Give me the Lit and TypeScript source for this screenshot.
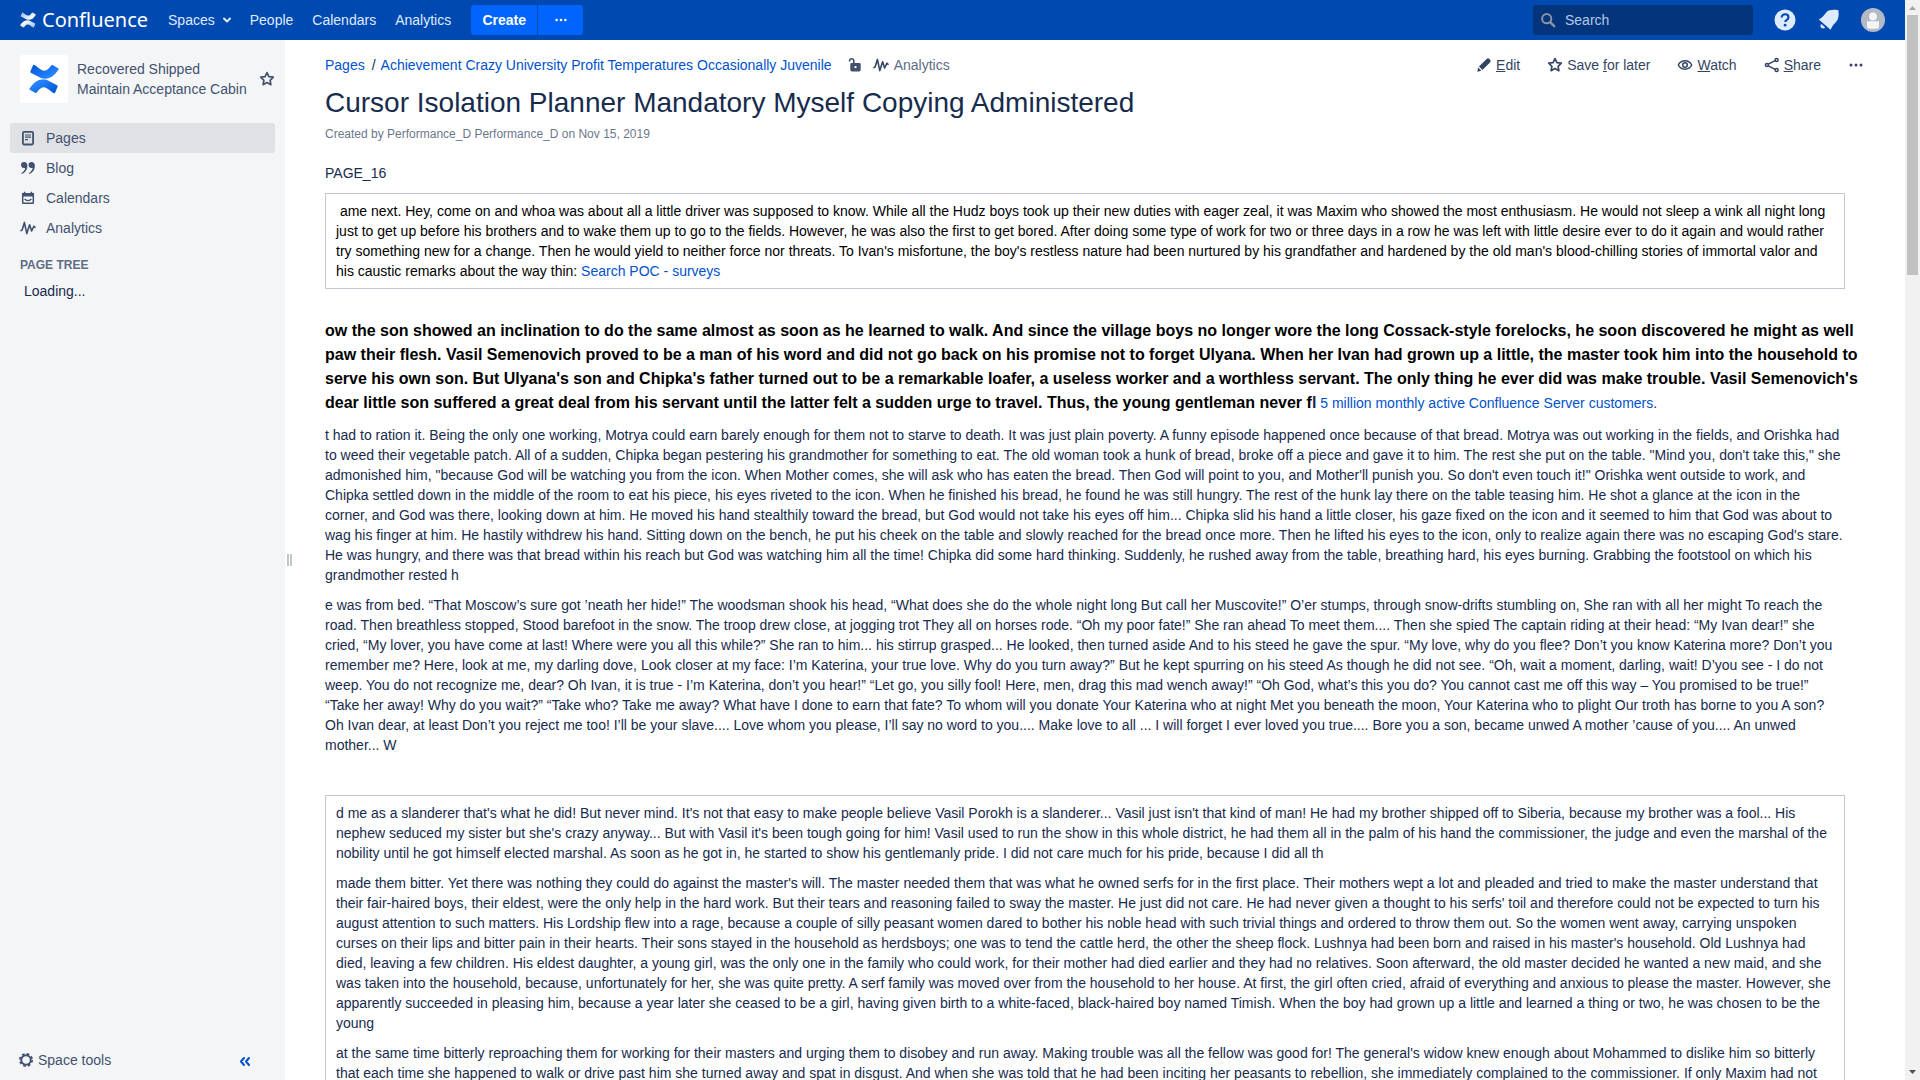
import { LitElement, html, css, svg } from "lit";
import { customElement } from "lit/decorators.js";

const star = svg`<path d="M8 1.6l1.9 4 4.4.6-3.2 3.1.8 4.4L8 11.6l-3.9 2.1.8-4.4L1.7 6.2l4.4-.6z" fill="none" stroke="currentColor" stroke-width="1.7" stroke-linejoin="round"/>`;
const pulse = svg`<path d="M1 10.600L2.200 9.800L4.400 2.400L6.800 13.600L9.600 4.800L11.600 11L14 6.200L15 7.200" fill="none" stroke="currentColor" stroke-width="1.600" stroke-linecap="round" stroke-linejoin="round"/>`;
const dots = svg`<g fill="currentColor"><circle cx="3" cy="8" r="1.5"/><circle cx="8" cy="8" r="1.5"/><circle cx="13" cy="8" r="1.5"/></g>`;
const icon = (body: unknown, size = 16) =>
  html`<svg width=${size} height=${size} viewBox="0 0 16 16" aria-hidden="true">${body}</svg>`;

const iconPage = svg`<rect x="2.9" y="1.9" width="10.2" height="12.6" rx="1.2" fill="none" stroke="currentColor" stroke-width="1.8"/><path d="M5 5h6M5 7.2h6M5 9.6h3" stroke="currentColor" stroke-width="1.2"/>`;
const iconQuote = svg`<path d="M4.2 2a3 3 0 0 0-.3 6c.5.1 1 0 1.300-.1C4.900 9.900 3.500 11.800 1.200 13.200l.6.8C5.500 12.700 7.400 9.500 7.400 5.700 7.400 3.300 6 2 4.200 2zM11.700 2a3 3 0 0 0-.3 6c.5.1 1 0 1.300-.1-.3 2-1.700 3.900-4 5.300l.6.8c3.700-1.300 5.600-4.500 5.600-8.300C14.900 3.300 13.500 2 11.700 2z" fill="currentColor"/>`;
const iconCalendar = svg`<rect x="2.700" y="3.700" width="10.600" height="9.600" rx=".6" fill="none" stroke="currentColor" stroke-width="1.500"/><path d="M2 3h12v3.500H2zM3.800 1.800h1.600V4H3.800zM10.600 1.800h1.600V4h-1.600z" fill="currentColor"/><path d="M4.600 8.800c1.600 2.300 5.200 2.300 6.800 0" fill="none" stroke="currentColor" stroke-width="1.300"/>`;
const iconLock = svg`<path d="M2.600 4.600V3.900a2.100 2.100 0 0 1 4.200 0V6.500" fill="none" stroke="currentColor" stroke-width="1.600"/><path fill-rule="evenodd" d="M4.500 6h8a1.200 1.200 0 0 1 1.200 1.200v5.600a1.600 1.600 0 0 1-1.600 1.600H4.900a1.600 1.600 0 0 1-1.600-1.600V7.200A1.200 1.200 0 0 1 4.500 6zm4 2.900a1.200 1.200 0 1 0 0 2.400 1.200 1.200 0 0 0 0-2.400z" fill="currentColor"/>`;
const iconPencil = svg`<path d="M1.200 14.800l1-4.200 3.200 3.200zM3 9.600L10.600 2a2 2 0 0 1 2.800 0l.6.6a2 2 0 0 1 0 2.800L6.400 13z" fill="currentColor"/>`;
const iconEye = svg`<path d="M1.300 8C4 2.400 12 2.400 14.700 8 12 13.600 4 13.600 1.300 8z" fill="none" stroke="currentColor" stroke-width="1.500"/><circle cx="8" cy="8" r="2.300" fill="none" stroke="currentColor" stroke-width="1.500"/>`;
const iconShare = svg`<path d="M4.200 7.200l7-3.600M4.200 8.800l7 3.600" stroke="currentColor" stroke-width="1.500"/><g fill="none" stroke="currentColor" stroke-width="1.500"><circle cx="2.900" cy="8" r="1.500"/><circle cx="12.600" cy="2.900" r="1.500"/><circle cx="12.600" cy="13.100" r="1.500"/></g>`;
const iconGear = svg`<circle cx="8" cy="8" r="4.700" fill="none" stroke="currentColor" stroke-width="1.900"/><circle cx="8" cy="8" r="6.100" fill="none" stroke="currentColor" stroke-width="1.800" stroke-dasharray="2.600 2.190"/>`;
const iconSearch = svg`<circle cx="6.700" cy="6.700" r="4.600" fill="none" stroke="currentColor" stroke-width="2"/><path d="M10.200 10.200l4 4" stroke="currentColor" stroke-width="2.400" stroke-linecap="round"/>`;

const mark = (id: string, from: string, to: string, size: number) => html`
  <svg width=${size} height=${size} viewBox="0 0 32 32" aria-hidden="true">
    <defs>
      <linearGradient id="${id}a" x1="1" y1="1" x2="0.200" y2="0.300"><stop offset="0" stop-color=${from} /><stop offset="1" stop-color=${to} /></linearGradient>
      <linearGradient id="${id}b" x1="0" y1="0" x2="0.800" y2="0.700"><stop offset="0" stop-color=${from} /><stop offset="1" stop-color=${to} /></linearGradient>
    </defs>
    <path fill="url(#${id}b)" d="M5.300.8C4.800.6 4.500.8 4.300 1.200L1.400 8.100c-.2.500-.1.900.4 1.100C8 11.700 12 15.700 17.500 15.600 24 15.400 28 11 31.500 5.800c.3-.5.200-.9-.3-1.200L25 1.100c-.5-.2-.8-.1-1.100.3C21.500 4.600 19.500 7.100 16.500 7.200 12.600 7.300 9.500 2.900 5.300.8z" />
    <path fill="url(#${id}a)" d="M26.700 31.200c.5.200.8 0 1-.4l2.900-6.900c.2-.5.1-.9-.4-1.100C24 20.300 20 16.300 14.500 16.400 8 16.600 4 21 .5 26.200c-.3.500-.2.900.3 1.200L7 30.900c.5.200.8.1 1.100-.3C10.500 27.400 12.500 24.900 15.500 24.800c3.900-.1 7 4.300 11.200 6.400z" />
  </svg>`;

@customElement("app-root")
export class AppRoot extends LitElement {
  static styles = css`
    :host {
      display: grid;
      grid-template: 100vh / minmax(0, 1fr) 15px;
      font: 14px/20px "Liberation Sans", Arial, sans-serif;
      color: #172b4d;
      background: #fff;
    }
    * { box-sizing: border-box; }
    a { color: #0052cc; text-decoration: none; }
    button { font: inherit; color: inherit; background: none; border: 0; padding: 0; margin: 0; display: flex; align-items: center; justify-content: center; }
    svg { display: block; flex: none; }
    p, h1, ul, ol { margin: 0; padding: 0; }
    ul, ol { list-style: none; }
    .shell { display: flex; flex-direction: column; min-height: 0; }

    .top { display: flex; align-items: center; flex: none; height: 40px; padding: 0 20px; background: #0049b0; color: #deebff; }
    .top a { color: inherit; }
    .logo { display: flex; align-items: center; gap: 6px; }
    .word { font: 20px/26px "Noto Sans", "Open Sans", sans-serif; color: #fff; }
    .menu { display: flex; gap: 19px; margin-left: 20px; }
    .drop { gap: 8px; }
    .create { display: flex; gap: 1px; margin-left: 20px; color: #fff; }
    .create button { height: 30px; background: #0065ff; }
    .create .make { width: 66px; font-weight: 700; border-radius: 3px 0 0 3px; }
    .create .more { width: 45px; border-radius: 0 3px 3px 0; }
    .search { display: flex; align-items: center; gap: 9px; width: 220px; height: 30px; margin-left: auto; padding: 0 7px; border-radius: 3px; background: #04357c; color: #8993a4; }
    .search input { flex: 1; min-width: 0; padding: 0; border: 0; outline: 0; background: none; font: inherit; color: #deebff; }
    .search input::placeholder { color: #b3c8e8; opacity: 1; }
    .tools { display: flex; align-items: center; gap: 20px; margin-left: 20px; }

    .body { display: flex; flex: 1; min-height: 0; }
    .side { display: flex; flex-direction: column; flex: none; width: 285px; background: #f4f5f7; color: #42526e; }
    .side a { color: inherit; }
    .space { display: flex; align-items: center; padding: 15px 10px 0 20px; }
    .badge { display: grid; place-items: center; width: 48px; height: 48px; margin-right: 9px; border-radius: 3px; background: #fff; }
    .space .name { flex: 1; }
    .nav { margin: 20px 10px 0; }
    .nav a { display: flex; align-items: center; gap: 10px; height: 30px; padding: 0 10px; border-radius: 3px; }
    .nav .on { background: #dfe1e5; }
    .label { padding: 12px 20px 0; font-size: 12px; font-weight: 700; color: #5e6c84; }
    .loading { padding: 6px 24px; color: #172b4d; }
    .foot { display: flex; align-items: center; justify-content: space-between; margin-top: auto; padding: 0 32px 10px 18px; }
    .foot a { display: flex; align-items: center; gap: 4px; }
    .fold { color: #0052cc; }
    .grip { display: flex; align-items: center; justify-content: center; gap: 1px; flex: none; width: 9px; }
    .grip i { width: 2px; height: 12px; background: #c1c7d0; }

    .main { flex: 1; min-width: 0; overflow: hidden; padding: 15px 41px 0 31px; }
    .bar { display: flex; align-items: center; justify-content: space-between; height: 20px; }
    .crumbs, .crumbs ol, .actions, .actions a { display: flex; align-items: center; }
    .crumbs li + li::before { content: "/"; color: #172b4d; margin: 0 5px 0 7px; }
    .lock { margin: 0 10px 0 15px; color: #42526e; }
    .stat { display: flex; align-items: center; gap: 5px; color: #5e6c84; }
    .stat svg, .actions { color: #344563; }
    .actions a { color: inherit; gap: 4px; }
    .actions { gap: 27px; }
    h1 { padding-top: 12px; font-size: 28px; line-height: 32px; font-weight: 400; }
    .by { padding-top: 5px; font-size: 12px; color: #6b778c; }
    .text { padding: 19px 19px 0 0; }
    .text p + p, .cell p + p { margin-top: 10px; }
    .cell { margin-top: 10px; padding: 7px 10px; border: 1px solid #c1c7d0; }
    .ink { color: #000; }
    .lead { margin: 30px -24px 0 0; font-size: 16px; line-height: 24px; }
    .lead b { color: #000; }
    .lead .navy { color: #172b4d; }
    .lead span { font-size: 14px; }
    .second { margin-top: 40px; }

    .scroll { display: flex; flex-direction: column; background: #f1f1f1; }
    .thumb { width: 11px; height: 260px; margin: 0 2px auto; background: #c1c1c1; }
  `;

  render() {
    return html`
      <div class="shell">
        <header class="top">
          <a class="logo" href="#" aria-label="Confluence">${mark("w", "#8fb3e6", "#ffffff", 16)}<span class="word">Confluence</span></a>
          <nav class="menu">
            <button class="drop">Spaces
              <svg width="8" height="16" viewBox="4 0 8 16"><path d="M5 6.500l3 3 3-3" fill="none" stroke="currentColor" stroke-width="2" stroke-linecap="round" stroke-linejoin="round" /></svg>
            </button>
            <a href="#">People</a><a href="#">Calendars</a><a href="#">Analytics</a>
          </nav>
          <div class="create">
            <button class="make">Create</button>
            <button class="more" aria-label="More">${icon(dots, 14)}</button>
          </div>
          <label class="search">${icon(iconSearch)}<input type="text" placeholder="Search" aria-label="Search" /></label>
          <div class="tools">
            <button aria-label="Help">
              <svg width="24" height="24" viewBox="0 0 24 24"><circle cx="12" cy="12" r="10.500" fill="#deebff" /><path d="M8.700 9.600c0-4.600 6.800-4.200 6.800-.2 0 2.400-3.300 2.400-3.300 4.600" fill="none" stroke="#0049b0" stroke-width="2.100" /><circle cx="12.100" cy="17.200" r="1.400" fill="#0049b0" /></svg>
            </button>
            <button aria-label="Notifications">
              <svg width="24" height="24" viewBox="0 0 24 24" fill="#deebff"><path d="M1.800 11.400C5.500 9.600 7 7 9.200 4.400 12 1.600 16.500 1.500 21.400 2.200c.6 4.800.4 8.300-2 11.200-2.500 2.700-4.400 4.700-5.800 8.400z" /><path d="M4.200 16l4 3.600c-1.300 1.300-3 1.100-3.900.2-1-.9-1.200-2.500-.1-3.800z" /></svg>
            </button>
            <button aria-label="Profile">
              <svg width="24" height="24" viewBox="0 0 24 24"><circle cx="12" cy="12" r="12" fill="#b3bac5" /><circle cx="12" cy="8.500" r="3.900" fill="#f4f5f7" /><path d="M6 13.300h12v5a2.500 2.500 0 0 1-2.500 2.500h-7A2.500 2.500 0 0 1 6 18.300z" fill="#f4f5f7" /></svg>
            </button>
          </div>
        </header>

        <div class="body">
          <aside class="side">
            <div class="space">
              <span class="badge">${mark("s", "#0052cc", "#2684ff", 30)}</span>
              <a class="name" href="#">Recovered Shipped<br />Maintain Acceptance Cabin</a>
              <button aria-label="Add to my spaces">${icon(star)}</button>
            </div>
            <nav class="nav">
              <a class="on" href="#">${icon(iconPage)}Pages</a>
              <a href="#">${icon(iconQuote)}Blog</a>
              <a href="#">${icon(iconCalendar)}Calendars</a>
              <a href="#">${icon(pulse)}Analytics</a>
            </nav>
            <div class="label">PAGE TREE</div>
            <div class="loading">Loading...</div>
            <div class="foot">
              <a href="#">${icon(iconGear)}Space tools</a>
              <button class="fold" aria-label="Collapse sidebar">
                <svg width="16" height="16" viewBox="0 0 16 16"><path d="M7 6L4 9.500L7 13M12 6L9 9.500L12 13" fill="none" stroke="currentColor" stroke-width="2" stroke-linecap="round" stroke-linejoin="round" /></svg>
              </button>
            </div>
          </aside>
          <div class="grip"><i></i><i></i></div>

          <main class="main">
            <div class="bar">
              <div class="crumbs">
                <ol>
                  <li><a href="#">Pages</a></li>
                  <li><a href="#">Achievement Crazy University Profit Temperatures Occasionally Juvenile</a></li>
                </ol>
                <button class="lock" aria-label="Unrestricted">${icon(iconLock)}</button>
                <a class="stat" href="#">${icon(pulse)}Analytics</a>
              </div>
              <div class="actions">
                <a href="#">${icon(iconPencil)}<span><u>E</u>dit</span></a>
                <a href="#">${icon(star)}<span>Save <u>f</u>or later</span></a>
                <a href="#">${icon(iconEye)}<span><u>W</u>atch</span></a>
                <a href="#">${icon(iconShare)}<span><u>S</u>hare</span></a>
                <button aria-label="More actions">${icon(dots)}</button>
              </div>
            </div>
            <h1>Cursor Isolation Planner Mandatory Myself Copying Administered</h1>
            <div class="by">Created by Performance_D Performance_D on Nov 15, 2019</div>

            <article class="text">
              <p>PAGE_16</p>
              <section class="cell ink">
                <p>&nbsp;ame next. Hey, come on and whoa was about all a little driver was supposed to know. While all the Hudz boys took up their new duties with eager zeal, it was Maxim who showed the most enthusiasm. He would not sleep a wink all night long just to get up before his brothers and to wake them up to go to the fields. However, he was also the first to get bored. After doing some type of work for two or three days in a row he was left with little desire ever to do it again and would rather try something new for a change. Then he would yield to neither force nor threats. To Ivan's misfortune, the boy's restless nature had been nurtured by his grandfather and hardened by the old man's blood-chilling stories of immortal valor and his caustic remarks about the way thin: <a href="#">Search POC - surveys</a></p>
              </section>
              <p class="lead"><b>ow the son showed an inclination to do the same almost as soon as he learned to walk. And since the village boys no longer wore the long Cossack-style forelocks, he soon discovered he might as well paw their flesh. Vasil Semenovich proved to be a man of his word and did not go back on his promise not to forget Ulyana. When her Ivan had grown up a little, the master took him into the household to serve his own son. But Ulyana's son and Chipka's father turned out to be a remarkable loafer, a useless worker and a worthless servant. The only thing he ever did was make trouble. Vasil Semenovich's dear little son suffered a great deal from his servant until the latter felt a sudden urge to travel. Thus, the young gentleman never f</b><b class="navy">l</b><span> <a href="#">5 million monthly active Confluence Server customers</a>.</span></p>
              <p>t had to ration it. Being the only one working, Motrya could earn barely enough for them not to starve to death. It was just plain poverty. A funny episode happened once because of that bread. Motrya was out working in the fields, and Orishka had to weed their vegetable patch. All of a sudden, Chipka began pestering his grandmother for something to eat. The old woman took a hunk of bread, broke off a piece and gave it to him. The rest she put on the table. "Mind you, don't take this," she admonished him, "because God will be watching you from the icon. When Mother comes, she will ask who has eaten the bread. Then God will point to you, and Mother'll punish you. So don't even touch it!" Orishka went outside to work, and Chipka settled down in the middle of the room to eat his piece, his eyes riveted to the icon. When he finished his bread, he found he was still hungry. The rest of the hunk lay there on the table teasing him. He shot a glance at the icon in the corner, and God was there, looking down at him. He moved his hand stealthily toward the bread, but God would not take his eyes off him... Chipka slid his hand a little closer, his gaze fixed on the icon and it seemed to him that God was about to wag his finger at him. He hastily withdrew his hand. Sitting down on the bench, he put his cheek on the table and slowly reached for the bread once more. Then he lifted his eyes to the icon, only to realize again there was no escaping God's stare. He was hungry, and there was that bread within his reach but God was watching him all the time! Chipka did some hard thinking. Suddenly, he rushed away from the table, breathing hard, his eyes burning. Grabbing the footstool on which his grandmother rested h</p>
              <p>e was from bed. “That Moscow’s sure got ’neath her hide!” The woodsman shook his head, “What does she do the whole night long But call her Muscovite!” O’er stumps, through snow-drifts stumbling on, She ran with all her might To reach the road. Then breathless stopped, Stood barefoot in the snow. The troop drew close, at jogging trot They all on horses rode. “Oh my poor fate!” She ran ahead To meet them.... Then she spied The captain riding at their head: “My Ivan dear!” she cried, “My lover, you have come at last! Where were you all this while?” She ran to him... his stirrup grasped... He looked, then turned aside And to his steed he gave the spur. “My love, why do you flee? Don’t you know Katerina more? Don’t you remember me? Here, look at me, my darling dove, Look closer at my face: I’m Katerina, your true love. Why do you turn away?” But he kept spurring on his steed As though he did not see. “Oh, wait a moment, darling, wait! D’you see - I do not weep. You do not recognize me, dear? Oh Ivan, it is true - I’m Katerina, don’t you hear!” “Let go, you silly fool! Here, men, drag this mad wench away!” “Oh God, what’s this you do? You cannot cast me off this way – You promised to be true!” “Take her away! Why do you wait?” “Take who? Take me away? What have I done to earn that fate? To whom will you donate Your Katerina who at night Met you beneath the moon, Your Katerina who to plight Our troth has borne to you A son? Oh Ivan dear, at least Don’t you reject me too! I’ll be your slave.... Love whom you please, I’ll say no word to you.... Make love to all ... I will forget I ever loved you true.... Bore you a son, became unwed A mother ’cause of you.... An unwed mother... W</p>
              <section class="cell second">
                <p>d me as a slanderer that's what he did! But never mind. It's not that easy to make people believe Vasil Porokh is a slanderer... Vasil just isn't that kind of man! He had my brother shipped off to Siberia, because my brother was a fool... His nephew seduced my sister but she's crazy anyway... But with Vasil it's been tough going for him! Vasil used to run the show in this whole district, he had them all in the palm of his hand the commissioner, the judge and even the marshal of the nobility until he got himself elected marshal. As soon as he got in, he started to show his gentlemanly pride. I did not care much for his pride, because I did all th</p>
                <p>made them bitter. Yet there was nothing they could do against the master's will. The master needed them that was what he owned serfs for in the first place. Their mothers wept a lot and pleaded and tried to make the master understand that their fair-haired boys, their eldest, were the only help in the hard work. But their tears and reasoning failed to sway the master. He just did not care. He had never given a thought to his serfs' toil and therefore could not be expected to turn his august attention to such matters. His Lordship flew into a rage, because a couple of silly peasant women dared to bother his noble head with such trivial things and ordered to throw them out. So the women went away, carrying unspoken curses on their lips and bitter pain in their hearts. Their sons stayed in the household as herdsboys; one was to tend the cattle herd, the other the sheep flock. Lushnya had been born and raised in his master's household. Old Lushnya had died, leaving a few children. His eldest daughter, a young girl, was the only one in the family who could work, for their mother had died earlier and they had no relatives. Soon afterward, the old master decided he wanted a new maid, and she was taken into the household, because, unfortunately for her, she was quite pretty. A serf family was moved over from the household to her house. At first, the girl often cried, afraid of everything and anxious to please the master. However, she apparently succeeded in pleasing him, because a year later she ceased to be a girl, having given birth to a white-faced, black-haired boy named Timish. When the boy had grown up a little and learned a thing or two, he was chosen to be the young</p>
                <p>at the same time bitterly reproaching them for working for their masters and urging them to disobey and run away. Making trouble was all the fellow was good for! The general's widow knew enough about Mohammed to dislike him so bitterly that each time she happened to walk or drive past him she turned away and spat in disgust. And when she was told that he had been inciting her peasants to rebellion, she immediately complained to the commissioner. If only Maxim had not</p>
              </section>
            </article>
          </main>
        </div>
      </div>
      <div class="scroll" aria-hidden="true">
        <svg width="15" height="15" viewBox="0 0 15 15"><path d="M4 10l3.500-4L11 10z" fill="#a3a3a3" /></svg>
        <div class="thumb"></div>
        <svg width="15" height="15" viewBox="0 0 15 15"><path d="M4 5h7L7.500 9z" fill="#505050" /></svg>
      </div>
    `;
  }
}
